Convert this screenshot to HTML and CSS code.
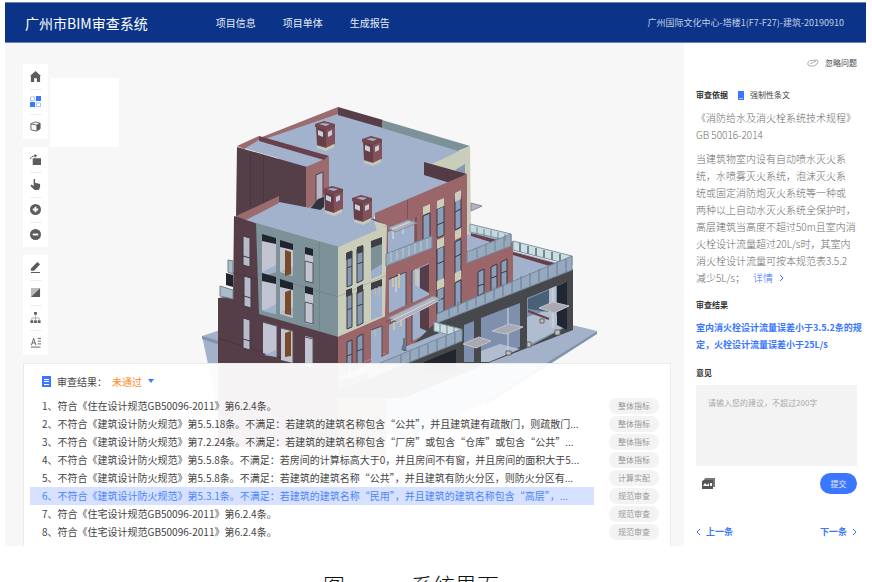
FILE: index.html
```html
<!DOCTYPE html>
<html lang="zh-CN">
<head>
<meta charset="utf-8">
<meta name="viewport" content="width=device-width, initial-scale=1">
<title>广州市BIM审查系统</title>
<link rel="stylesheet" href="styles.css">
</head>
<body>
<div class="app">
  <header class="topbar">
    <h1 class="brand">广州市BIM审查系统</h1>
    <nav class="menu">
      <a href="#info">项目信息</a>
      <a href="#units">项目单体</a>
      <a href="#report">生成报告</a>
    </nav>
    <p class="project">广州国际文化中心-塔楼1(F7-F27)-建筑-20190910</p>
  </header>

  <div class="workspace">
    <main class="viewer">
      <svg class="model" viewBox="5 43 679 503" role="img" aria-label="建筑模型">
        <!-- ground slabs -->
        <path fill="#a3b2c9" d="M202 336l18-6v80l-4-9zM560 322l37 9-111 71-80 40-90-40 120-60z"/>
        <path fill="#8193ae" d="M202 336l18 5v4l-18-6z"/>
        <path fill="#8193ae" d="M597 331v3l-111 71v-4z"/>
        <!-- solid core behind the faces -->
        <path fill="#6b5a66" d="M238 149l68 18 22-10 46 62 92-44v86l46-18v40l-120 60-20 92h-60l-92-12V300l14-2 2-80 3-3z"/>
        <!-- main roof -->
        <path fill="#9b6b6e" d="M338 107v9l-68 27-13-4z"/>
        <path fill="#a2b2cd" d="M338 114l120 36 9 14-16 17-75 35-38 30-82-27 23-60-20-18z"/>
        <path fill="#563d47" d="M338 107l45 13v8l-45-13z"/>
        <path fill="#7d9298" d="M382 120l88 26-12 5-76-23z"/>
        <path fill="#c9cdb9" d="M470 146l1 88-6 8-6-60-27-18z"/>
        <path fill="#8799b3" d="M455 170l10-6v12z"/>
        <path fill="#533b45" d="M424 162l43 12-17 9-26-8z"/>
        <!-- stair tower -->
        <path fill="#543e48" d="M237 147l70 20v44l-28-8-43 14z"/>
        <path fill="#4b3540" d="M250 151h1v56h-1zM263 155h1v48h-1z"/>
        <path fill="#a2b2cd" d="M243 148l16-8 61 18-14 8z"/>
        <path fill="#9b6b6e" d="M237 146l22-10v4l-15 9zM306 167l23-10v32l-23 22z"/>
        <path fill="#67404b" d="M259 136l70 20-5 4-65-19z"/>
        <path fill="#bab4c5" stroke="#4c4350" d="M316 175l7-3v26l-7 5z"/>
        <path fill="#33343b" d="M308 211l10-12 6-2v10l-7 6z"/>
        <!-- lower roof -->
        <path fill="#a2b2cd" d="M242 221l37-19 94 18 14 8-49 19-81-23z"/>
        <path fill="#9b6b6e" d="M236 216l43-20v7l-33 17z"/>
        <path fill="#c9cdb9" d="M374 221l14 4-11 6z"/>
        <!-- roof shafts -->
        <g id="shafts">
          <g id="shaft">
            <path fill="#683f48" d="M316 125l10 3v20l-9-3z"/>
            <path fill="#84525a" d="M326 128l9-3v19l-9 4z"/>
            <path fill="#744750" d="M315 124l9-3 11 3v3l-9 3-11-3z"/>
            <path fill="#a5b0c3" d="M319 124l5-1 6 1-4 2z"/>
            <path fill="#c6d0de" d="M318 130l5 2v5l-5-2zM328 132l4-2v5l-4 2z"/>
            <path fill="#c8c9b7" d="M317 146l9 2 8-4v3l-8 4-9-3z"/>
          </g>
          <use href="#shaft" x="47" y="15"/>
          <use href="#shaft" x="8" y="65"/>
          <use href="#shaft" x="37" y="74"/>
        </g>
        <!-- left dark facade -->
        <path fill="#553e47" d="M234 216l24 8 1 89 79 24v110H218V298l15-2z"/>
        <path fill="#493640" d="M233 272l25 7v1l-25-7zM218 338l118 36v1l-118-36z"/>
        <path fill="#a9bbc7" stroke="#6e8290" d="M228 260l5 1v13l-5-2zM220 286l13 4v9l-13-3z"/>
        <path fill="#22232d" d="M226 273l7 2v12l-7-2z"/>
        <path fill="#7d9298" d="M256 223l83 24v90l-80-23z"/>
        <path fill="#718489" d="M258 273l79 23v1l-79-23zM319 242h1v88h-1z"/>
        <!-- cream corner -->
        <path fill="#c9cdb9" d="M338 247l51-22v49l-4 43-47 20z"/>
        <path fill="#aeb39f" d="M338 296l48-21v1l-48 21z"/>
        <!-- red corner base -->
        <path fill="#9b666a" d="M338 337l48-21v140h-48z"/>
        <path fill="#b98480" d="M338 373l48-21v1l-48 21z"/>
        <!-- openings, left face -->
        <g fill="#b9b9ca" stroke="#3c3b47">
          <path d="M243 236l7 2v29l-7-2zM244 276l7 2v30l-7-2zM243 318l7 2v30l-7-2z"/>
          <path d="M243 256l7 2M244 296l7 2M243 339l7 2"/>
        </g>
        <g fill="#c3c4d2">
          <path d="M262 237l14 4v31l-14 4zM280 242l13 4v30l-13-4zM305 249l8 2v32l-8-2zM262 277l14 4v33l-14-4zM280 282l13 4v32l-13-4zM305 289l8 2v34l-8-2zM263 322l14 4v31l-14-4zM281 328l12 3v32l-12-3zM305 336l8 2v30l-8-2z"/>
        </g>
        <path fill="#a2b2cd" d="M262 272l14-7v7l-11 3zM262 311l14-7v10zM264 355l12-5v7zM281 271l12-4v9zM281 312l12-5v10z"/>
        <path fill="#794a25" d="M285 250l6 2v22l-6 2zM285 292l6-2v25l-6-1zM285 333l6-2v25l-6 1z"/>
        <path fill="#20242e" d="M262 234l14 4v6l-14-3zM280 240l13 4v6l-13-3zM305 247l8 2v7l-8-2zM262 273l14 4v7l-14-3zM280 279l13 4v7l-13-3zM305 286l8 2v7l-8-2z"/>
        <g fill="none" stroke="#55545f">
          <path d="M305 261l8 2v20l-8-2zM305 302l8 2v20l-8-2zM305 337l8 2v29M262 322l15 4v32M281 328l12 3v32"/>
        </g>
        <!-- openings, right face -->
        <g fill="#8798b0" stroke="#3d3d48">
          <path d="M347 253l5-2v34l-5 2zM357 249l6-3v34l-6 3zM347 295l5-2v34l-5 2zM357 292l6-3v34l-6 3zM347 342l5-2v40l-5 2zM357 337l6-3v40l-6 3z"/>
          <path d="M347 268l5-2M357 264l6-2M347 310l5-2M357 306l6-2M347 356l5-2M357 351l6-2"/>
        </g>
        <path fill="#7d9298" d="M371 242l11-4v36l-11 5z"/>
        <path fill="#9eb0cb" d="M371 271l11-7v10l-11 5zM371 287l11-4v33l-11 4zM371 330l11-4v32l-11 6z"/>
        <path fill="#3f3e46" d="M346 253l6-2v7l-6 2zM357 247l6-2v7l-6 2zM371 241l11-4v7l-11 4zM346 290l6-2v7l-6 2zM357 287l6-3v7l-6 3zM371 283l11-4v7l-11 4z"/>
        <path fill="none" stroke="#554753" d="M371 330l11-4v32"/>
        <path stroke="#cbbf98" d="M375 288v7M379 286v9M375 330v7"/>
        <!-- red facade -->
        <path fill="#9b666a" d="M375 213l92-39v88l46-21v47l-76 33-3 14-49 21v-39l2-92-12-6z"/>
        <path fill="#7d4f57" d="M407 200h1v19h-1zM436 240h1v80h-1zM460 225h1v80h-1zM386 321l51-23v1l-51 23z"/>
        <path fill="#9eb0cb" d="M388 232l26-12v23l-26 12zM389 280l17-8v33l-17 8zM412 271l17-8v32l-17 8zM389 324l17-8v31l-17 8zM412 315l17-8v26l-17 8z"/>
        <path fill="#563d47" d="M420 268l9-4v29l-9-5zM420 311l9-4v25l-9-4z"/>
        <path fill="none" stroke="#464751" d="M389 279l17-7v33M412 270v33M389 324l17-8v31M412 315v27M416 217v24"/>
        <path stroke="#d2c39f" stroke-width="2" d="M393 278v9M399 274v14M416 269v16M394 322v8M401 319v7"/>
        <path stroke="#e2e2e5" d="M396 277v15M418 270v17M393 229v10M403 225v9"/>
        <g fill="#8c9eb9" stroke="#353944">
          <path d="M423 216l7-3v24l-7 3zM437 209l7-3v29l-7 3zM455 199l6-3v31l-6 3zM437 249l7-3v33l-7 3zM455 242l6-3v32l-6 3zM437 290l7-3v24l-7 3zM455 283l6-3v24l-6 3z"/>
          <path d="M437 225l7-3M455 212l6-3M437 264l7-3M455 257l6-3M437 301l7-3"/>
          <path d="M478 272l6-3v24l-6 3zM491 267l6-3v25l-6 3zM501 262l6-3v26l-6 3zM478 286l6-2M491 278l6-2M501 273l6-2"/>
        </g>
        <path fill="#c9cdb9" d="M423 207l7-3v8l-7 3zM437 201l7-3v8l-7 3zM455 193l6-3v9l-6 3zM437 240l7-3v9l-7 3zM455 231l6-3v9l-6 3zM437 281l7-3v9l-7 3zM455 273l6-3v9l-6 3z"/>
        <!-- canopies -->
        <path fill="#b0b2be" stroke="#858c9c" d="M388 228l20-8 9 3-22 9zM388 318l45-22 8 3-43 23zM471 203l11 3-11 5z"/>
        <path stroke="#d8d8df" d="M391 321l43-21M396 323l42-22M392 229l18-7"/>
        <path fill="#97a9bd" stroke="#74889b" d="M386 254l46-18v12l-46 18z"/>
        <path fill="none" stroke="#b9c8d4" d="M391 252v10M397 250v10M403 248v10M409 246v10M415 243v10M421 241v10M427 239v10"/>
        <!-- upper balcony -->
        <path fill="#a2b2cd" d="M467 235l20-5 24 8-44 17z"/>
        <path fill="#6a404a" d="M471 233l34 9-5 3-29-9z"/>
        <path fill="#c6d8dc" stroke="#8195a5" d="M470 224l41 10v7l-41-9z"/>
        <path fill="#97a9bd" stroke="#74889b" d="M511 234v12l-44 17v-11z"/>
        <path fill="none" stroke="#71879a" d="M477 227v7M484 229v7M491 230v7M498 232v7M505 234v7M504 237v11M495 241v10M486 244v11M477 248v10"/>
        <!-- far terrace -->
        <path fill="#a2b2cd" d="M513 251l53 14-53 20z"/>
        <path fill="#663e48" d="M513 252l45 12-5 3-40-12z"/>
        <path fill="#cddedf" stroke="#8195a5" d="M513 241l59 15v9l-59-15z"/>
        <path fill="none" stroke="#70889a" stroke-width="2" d="M520 243v9M528 246v8M536 248v8M544 250v8M552 252v8M560 254v8"/>
        <!-- dark podium -->
        <path fill="#47484c" d="M573 269v61l-87 34-82 34h-84l66-27 51-50z"/>
        <path fill="#96a9bf" stroke="#74889b" d="M572 256v14l-135 53v-9z"/>
        <path fill="none" stroke="#687f95" d="M566 259v13M557 262v13M548 266v13M539 269v13M530 273v13M521 276v13M512 280v13M503 284v12M494 287v12M485 291v12M476 294v12M467 298v12M458 301v12M449 305v12"/>
        <path fill="#7e90ae" d="M481 318l39-15v44l-39 15zM527 298l37-15v45l-37 20zM464 325l10-4v41h-10z"/>
        <path fill="#b0bdd1" d="M481 351l19-7 20 5-31 13h-8zM527 317l24-8 15 17-39 20z"/>
        <path fill="#486078" d="M528 299l21-9v22l-21-3z"/>
        <path fill="#b7bfd0" d="M549 289l7-3v40l-7 2z"/>
        <path fill="#202732" d="M557 286l10-4v48l-10-5z"/>
        <path fill="none" stroke="#693f48" stroke-width="2" d="M528 311l21 8"/>
        <path stroke="#d0d7e3" d="M508 308v42M553 288v40"/>
        <path fill="#aaa9b2" stroke="#c3c3cb" d="M492 331l17-7 14 3-17 7zM539 308l14-6 16 4-15 7zM463 344l16-7 12 4-15 7z"/>
        <path fill="#c3c2b7" stroke="#656568" d="M506 351h5v4h-5zM527 342h4v5h-4zM555 330h5v5h-5zM540 319h4v4h-4z"/>
        <!-- front terrace -->
        <path fill="#a2b2cd" d="M386 355l48-20 11-4 17 3-30 15-80 29h-14z"/>
        <path fill="#cddedf" stroke="#8195a5" d="M434 322l27 7v9l-27-7z"/>
        <path fill="none" stroke="#70889a" d="M440 323v9M447 325v9M454 327v9"/>
        <path fill="#96a9bf" stroke="#74889b" d="M462 329v12l-94 38v-11z"/>
        <path fill="none" stroke="#687f95" d="M455 333v11M446 336v11M437 340v11M428 344v11M419 347v11M410 351v11M401 355v11"/>
        <path fill="#20252e" d="M424 362l32-13v22h-32z"/>
        <path stroke="#6a7288" stroke-width="2" d="M404 338v12M402 350l2-6 2 7"/>
      </svg>

      <div class="toolbar">
        <div class="toolgroup">
          <button type="button" aria-label="主视图"><svg viewBox="0 0 12 12"><path d="M6 0l6 5.500h-1V12H7.500V8h-3v4H1V5.500H0z"/></svg></button>
          <button type="button" class="active" aria-label="楼层"><svg viewBox="0 0 12 12"><path d="M6.500 0H12v5.500H6.500zM0 6.500h5.500V12H0z"/><path class="line pale-line" d="M.5 1H5v4H.5zM7 7.500h4.500v4H7z"/></svg></button>
          <button type="button" aria-label="三维"><svg viewBox="0 0 12 12"><path class="line" d="M1 3l5-2 5 1.500v6L7 11 1 9.500zM1 3l6 1.500 4-2"/><path d="M7 4.500l4-2v6.200L7 11z"/></svg></button>
          <div class="flyout"></div>
        </div>
        <div class="toolgroup">
          <button type="button" aria-label="旋转"><svg viewBox="0 0 12 12"><path d="M3 4.500h9V12H3zM5 0l3 2-3 2z"/><path class="line" d="M.5 5.500Q1 2 6 2"/></svg></button>
          <button type="button" aria-label="平移"><svg viewBox="0 0 12 12"><path d="M4 0h1.500v4L11 5.500V9l-1.500 3H5L.5 7.500 1.500 6 4 7.500z"/></svg></button>
          <button type="button" aria-label="放大"><svg viewBox="0 0 12 12"><circle cx="6" cy="6" r="6"/><path class="cut" d="M3 6h6M6 3v6"/></svg></button>
          <button type="button" aria-label="缩小"><svg viewBox="0 0 12 12"><circle cx="6" cy="6" r="6"/><path class="cut" d="M3 6h6"/></svg></button>
        </div>
        <div class="toolgroup">
          <button type="button" aria-label="测量"><svg viewBox="0 0 12 12"><path d="M8 0l3 2.500-6.500 7H1V7zM1 11h10v1H1z"/></svg></button>
          <button type="button" aria-label="剖切"><svg viewBox="0 0 12 12"><path class="pale" d="M1 1h10L1 11z"/><path d="M11 1v10H1z"/></svg></button>
          <button type="button" aria-label="结构树"><svg viewBox="0 0 12 12"><path d="M4.500 0h3v3h-3zM.5 9h3v3h-3zM4.500 9h3v3h-3zM8.500 9h3v3h-3z"/><path class="thin" d="M6 3v6M2 9V6.500h8V9"/></svg></button>
          <button type="button" aria-label="标注"><svg viewBox="0 0 12 12"><path class="line" d="M1.500 9L4 1.500 6.500 9M2.500 6.500h3M8.500 1.500H12M8.500 4.500H12M8.500 7.500H12M1 11h10.500"/></svg></button>
        </div>
      </div>

      <section class="results">
        <h2 class="results-head">
          <svg class="doc" viewBox="0 0 9 11"><path fill="#3a76ff" d="M0 0h9v11H0z"/><path stroke="#fff" d="M2 3.500h5M2 5.500h5M2 8.500h5"/></svg>
          <span>审查结果：</span>
          <button type="button" class="status">未通过<svg viewBox="0 0 6 4"><path fill="#3a76ff" d="M0 0h6L3 4z"/></svg></button>
        </h2>
        <ol class="rules">
          <li><span class="rule">1、符合《住在设计规范GB50096-2011》第6.2.4条。</span><span class="tag">整体指标</span></li>
          <li><span class="rule">2、不符合《建筑设计防火规范》第5.5.18条。不满足：若建筑的建筑名称包含“公共”，并且建筑建有疏散门，则疏散门...</span><span class="tag">整体指标</span></li>
          <li><span class="rule">3、不符合《建筑设计防火规范》第7.2.24条。不满足：若建筑的建筑名称包含“厂房”或包含“仓库”或包含“公共”...</span><span class="tag">整体指标</span></li>
          <li><span class="rule">4、不符合《建筑设计防火规范》第5.5.8条。不满足：若房间的计算标高大于0，并且房间不有窗，并且房间的面积大于5...</span><span class="tag">整体指标</span></li>
          <li><span class="rule">5、不符合《建筑设计防火规范》第5.5.8条。不满足：若建筑的建筑名称“公共”，并且建筑有防火分区，则防火分区有...</span><span class="tag">计算实配</span></li>
          <li><span class="rule current">6、不符合《建筑设计防火规范》第5.3.1条。不满足：若建筑的建筑名称“民用”，并且建筑的建筑名称包含“高层”，...</span><span class="tag">规范审查</span></li>
          <li><span class="rule">7、符合《住宅设计规范GB50096-2011》第6.2.4条。</span><span class="tag">规范审查</span></li>
          <li><span class="rule">8、符合《住宅设计规范GB50096-2011》第6.2.4条。</span><span class="tag">规范审查</span></li>
        </ol>
      </section>
    </main>

    <aside class="detail">
      <button type="button" class="ignore"><svg viewBox="0 0 12 8"><path d="M1 6Q0 2 4 1.500L10 1q2 1 0 4l-3 2H3zM3 5l6-3"/></svg>忽略问题</button>
      <div class="basis">
        <h3>审查依据</h3>
        <svg viewBox="0 0 6 9"><path fill="#3a76ff" d="M0 0h6v9H0z"/><path stroke="#a8c4ff" d="M1 7.500h4"/></svg>
        <span>强制性条文</span>
      </div>
      <p class="clause">《消防给水及消火栓系统技术规程》<br>GB 50016-2014</p>
      <p class="clause">当建筑物室内设有自动喷水灭火系<br>统，水喷雾灭火系统，泡沫灭火系<br>统或固定消防炮灭火系统等一种或<br>两种以上自动水灭火系统全保护时，<br>高层建筑当高度不超过50m且室内消<br>火栓设计流量超过20L/s时，其室内<br>消火栓设计流量可按本规范表3.5.2<br>减少5L/s；<a class="more" href="#detail">详情<svg viewBox="0 0 5 8"><path d="M1 1l3 3-3 3"/></svg></a></p>
      <h3 class="result-title">审查结果</h3>
      <p class="conclusion">室内消火栓设计流量误差小于3.5.2条的规<br>定，火栓设计流量误差小于25L/s</p>
      <h3><label for="opinion">意见</label></h3>
      <textarea id="opinion" placeholder="请输入您的建议，不超过200字"></textarea>
      <div class="actions">
        <button type="button" class="attach" aria-label="添加图片"><svg viewBox="0 0 13 11"><path fill="#777" d="M3 0h10v9h-2V2H2z"/><path fill="#555" d="M0 3l2-1h9v9H0z"/><path fill="#fff" d="M1 8l2-3 2 2 2-2v3zM8 5h2v3H8z"/></svg></button>
        <button type="button" class="submit">提交</button>
      </div>
      <nav class="pager">
        <a href="#prev"><svg viewBox="0 0 5 8"><path d="M4 1L1 4l3 3"/></svg>上一条</a>
        <a href="#next">下一条<svg viewBox="0 0 5 8"><path d="M1 1l3 3-3 3"/></svg></a>
      </nav>
    </aside>
  </div>
</div>
<footer class="caption"><span>图</span><span>系统界面</span></footer>
</body>
</html>
```
FILE: styles.css
```css
* { box-sizing: border-box; }

body {
  margin: 0;
  height: 100vh;
  overflow: hidden;
  display: flex;
  flex-direction: column;
  background: #fff;
  color: #444;
  font-family: "Noto Sans CJK SC", sans-serif;
  font-size: 10px;
}

h1, h2, h3, p, ol { margin: 0; padding: 0; font-weight: 400; }
a { color: inherit; text-decoration: none; }
button { margin: 0; padding: 0; border: 0; background: none; color: inherit; font: inherit; }

.app {
  flex: 1;
  min-height: 0;
  display: flex;
  flex-direction: column;
  padding: 2px 6px 0 5px;
}

/* top bar */
.topbar {
  display: flex;
  align-items: center;
  flex: 0 0 41px;
  padding: 0 22px 0 20px;
  background: #0b3488;
  border: solid #6a80b8;
  border-width: 1px 0;
  color: #e8edf8;
}
.brand { font-size: 14px; line-height: 20px; color: #fff; }
.menu { display: flex; gap: 27px; margin-left: 68px; }
.project { margin-left: auto; color: #c3cde4; font-size: 9px; }

.workspace {
  flex: 1;
  min-height: 0;
  display: grid;
  grid-template-columns: 1fr 182px;
}

/* model viewer */
.viewer {
  position: relative;
  display: flex;
  flex-direction: column;
  padding: 21px 13px 0 18px;
  background: #f7f7f7;
}
.model { position: absolute; inset: 0; width: 100%; height: 100%; }

.toolbar {
  position: relative;
  display: flex;
  flex-direction: column;
  align-self: flex-start;
  gap: 8px;
}
.toolgroup { position: relative; background: #fff; width: 25px; }
.toolgroup button {
  display: flex;
  align-items: center;
  justify-content: center;
  width: 25px;
  height: 25px;
  color: #5c5c5c;
}
.toolgroup button + button {
  background: linear-gradient(#eee, #eee) center top / 12px 1px no-repeat;
}
.toolgroup svg { width: 11px; height: 11px; fill: currentColor; }
.toolgroup .active { color: #3a76ff; }
.toolgroup .line { fill: none; stroke: currentColor; }
.toolgroup .pale-line { stroke: #9dbbff; }
.toolgroup .thin { fill: none; stroke: #aaa; }
.toolgroup .cut { stroke: #fff; stroke-width: 2; }
.toolgroup .pale { fill: #bbb; }
.flyout {
  position: absolute;
  left: 27px;
  top: 14px;
  width: 69px;
  height: 69px;
  background: #fff;
}

/* review results */
.results {
  position: relative;
  margin-top: auto;
  padding: 7px 11px 5px 6px;
  background: rgba(255, 255, 255, 0.94);
  border: solid #ebebeb;
  border-width: 1px 1px 0;
}
.results-head {
  display: flex;
  align-items: center;
  height: 20px;
  margin-bottom: 6px;
  padding-left: 12px;
  font-size: 10px;
}
.doc { width: 9px; height: 11px; margin-right: 6px; }
.status {
  display: flex;
  align-items: center;
  gap: 6px;
  margin-left: 5px;
  color: #ff8a1e;
}
.status svg { width: 6px; height: 4px; }
.rules { list-style: none; }
.rules li { display: flex; align-items: center; gap: 15px; height: 18px; }
.rule {
  flex: 1;
  min-width: 0;
  padding-left: 12px;
  line-height: 18px;
  white-space: nowrap;
  overflow: hidden;
}
.current { background: #d6e2ff; color: #4c83ff; }
.tag {
  width: 50px;
  border-radius: 8px;
  background: #f3f3f3;
  color: #999;
  font-size: 8px;
  line-height: 16px;
  text-align: center;
}

/* detail column */
.detail {
  display: flex;
  flex-direction: column;
  padding: 12px 9px 5px 12px;
  background: #fff;
}
.detail h3 { font-size: 8px; font-weight: 700; line-height: 16px; color: #333; }
.detail svg { fill: none; }
.ignore {
  display: flex;
  align-items: center;
  align-self: flex-end;
  gap: 6px;
  font-size: 8px;
  line-height: 16px;
}
.ignore svg { width: 12px; height: 8px; stroke: #aaa; }
.basis {
  display: flex;
  align-items: center;
  margin: 16px 0 6px;
  font-size: 8px;
  line-height: 16px;
}
.basis svg { width: 6px; height: 9px; margin: 0 6px 0 10px; }
.clause {
  margin-bottom: 7px;
  color: #6a6a6a;
  font-weight: 300;
  line-height: 17px;
  white-space: nowrap;
}
.more { margin-left: 8px; color: #3a76ff; }
.more svg { width: 5px; height: 8px; margin-left: 6px; stroke: #3a76ff; }
.detail .result-title { margin: 4px 0 6px; }
.conclusion {
  margin-bottom: 12px;
  color: #3a76ff;
  font-size: 9px;
  font-weight: 700;
  line-height: 17px;
  white-space: nowrap;
}
textarea {
  display: block;
  width: 100%;
  height: 81px;
  margin-top: 4px;
  padding: 10px 12px;
  border: 0;
  background: #f3f3f3;
  font: inherit;
  font-size: 8px;
  line-height: 16px;
  resize: none;
}
textarea::placeholder { color: #aaa; }
.actions {
  display: flex;
  align-items: center;
  justify-content: space-between;
  margin-top: 7px;
  padding-left: 6px;
}
.attach svg { display: block; width: 13px; height: 11px; }
.submit {
  width: 37px;
  border-radius: 11px;
  background: #3a76ff;
  color: #e8efff;
  font-size: 8px;
  line-height: 21px;
}
.pager {
  display: flex;
  justify-content: space-between;
  margin-top: auto;
  color: #3a76ff;
  font-size: 9px;
  font-weight: 700;
  line-height: 18px;
}
.pager a { display: flex; align-items: center; gap: 5px; }
.pager svg { width: 5px; height: 8px; stroke: #3a76ff; }

/* figure caption */
.caption {
  flex: 0 0 36px;
  display: flex;
  justify-content: center;
  gap: 66px;
  padding: 28px 50px 0 0;
  overflow: hidden;
  color: #111;
  font-family: "Liberation Serif", "Noto Sans CJK SC", serif;
  font-size: 22px;
  font-weight: 300;
  line-height: 26px;
}
```
